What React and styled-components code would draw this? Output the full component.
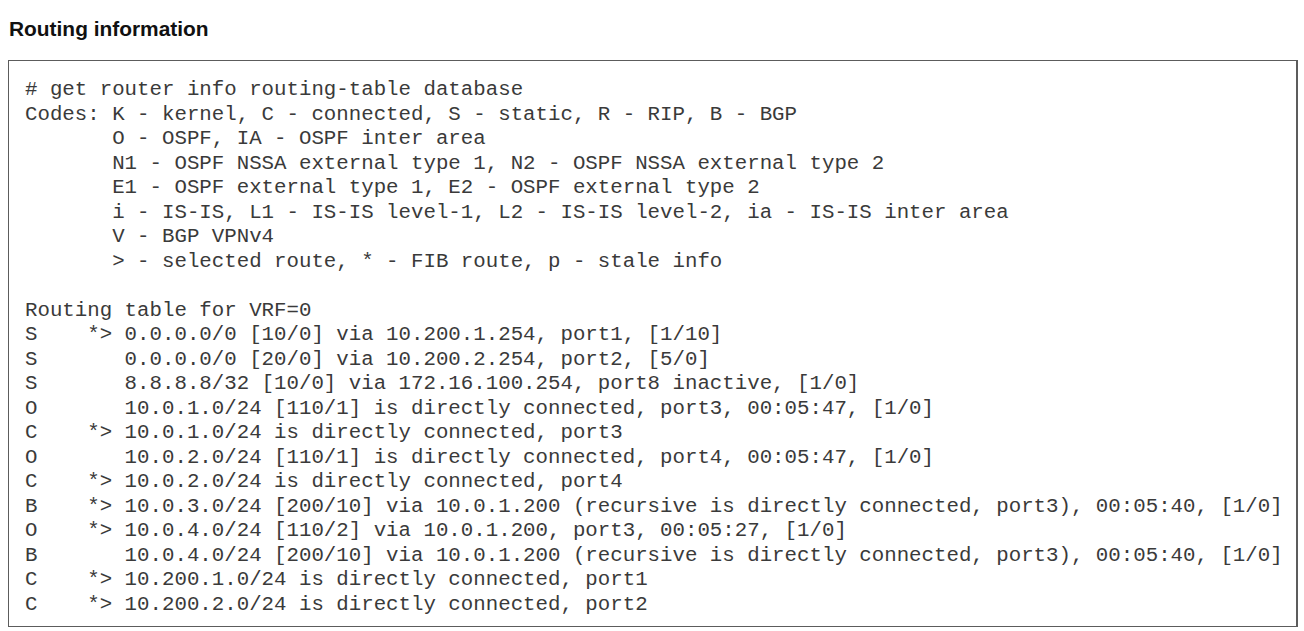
import React from "react"
import styled, { createGlobalStyle } from "styled-components"

const GlobalStyle = createGlobalStyle`
  html, body {
    margin: 0;
    padding: 0;
    background: #fff;
  }
`

const header = [
  "# get router info routing-table database",
  "Codes: K - kernel, C - connected, S - static, R - RIP, B - BGP",
  "       O - OSPF, IA - OSPF inter area",
  "       N1 - OSPF NSSA external type 1, N2 - OSPF NSSA external type 2",
  "       E1 - OSPF external type 1, E2 - OSPF external type 2",
  "       i - IS-IS, L1 - IS-IS level-1, L2 - IS-IS level-2, ia - IS-IS inter area",
  "       V - BGP VPNv4",
  "       > - selected route, * - FIB route, p - stale info",
]

const routes = [
  ["S", true, "0.0.0.0/0 [10/0] via 10.200.1.254, port1, [1/10]"],
  ["S", false, "0.0.0.0/0 [20/0] via 10.200.2.254, port2, [5/0]"],
  ["S", false, "8.8.8.8/32 [10/0] via 172.16.100.254, port8 inactive, [1/0]"],
  ["O", false, "10.0.1.0/24 [110/1] is directly connected, port3, 00:05:47, [1/0]"],
  ["C", true, "10.0.1.0/24 is directly connected, port3"],
  ["O", false, "10.0.2.0/24 [110/1] is directly connected, port4, 00:05:47, [1/0]"],
  ["C", true, "10.0.2.0/24 is directly connected, port4"],
  ["B", true, "10.0.3.0/24 [200/10] via 10.0.1.200 (recursive is directly connected, port3), 00:05:40, [1/0]"],
  ["O", true, "10.0.4.0/24 [110/2] via 10.0.1.200, port3, 00:05:27, [1/0]"],
  ["B", false, "10.0.4.0/24 [200/10] via 10.0.1.200 (recursive is directly connected, port3), 00:05:40, [1/0]"],
  ["C", true, "10.200.1.0/24 is directly connected, port1"],
  ["C", true, "10.200.2.0/24 is directly connected, port2"],
]

const App = () => {
  return (
    <Page>
      <GlobalStyle />
      <Title>Routing information</Title>
      <Console>
        {header.map((line, i) => (
          <Line key={"h" + i}>{line}</Line>
        ))}
        <Line> </Line>
        <Line>Routing table for VRF=0</Line>
        {routes.map(([code, best, rest], i) => (
          <Line key={"r" + i}>
            {code + "    " + (best ? "*> " : "   ") + rest}
          </Line>
        ))}
      </Console>
    </Page>
  )
}

export default App

const Page = styled.div`
  padding: 17px 6px 0 8px;
  width: 1290px;
`

const Title = styled.h2`
  margin: 0 0 19px 1px;
  font-family: "Liberation Sans", Arial, sans-serif;
  font-weight: 700;
  font-size: 20.9px;
  line-height: 24px;
  color: #111;
`

const Console = styled.pre`
  margin: 0;
  box-sizing: border-box;
  width: 1290px;
  border: 1px solid #5c5c5c;
  border-right-width: 2px;
  padding: 17px 0 9px 16px;
  font-family: "Liberation Mono", "Courier New", monospace;
  font-size: 20.75px;
  line-height: 24.52px;
  color: #3a3a3a;
`

const Line = styled.div`
  white-space: pre;
  height: 24.52px;
`
